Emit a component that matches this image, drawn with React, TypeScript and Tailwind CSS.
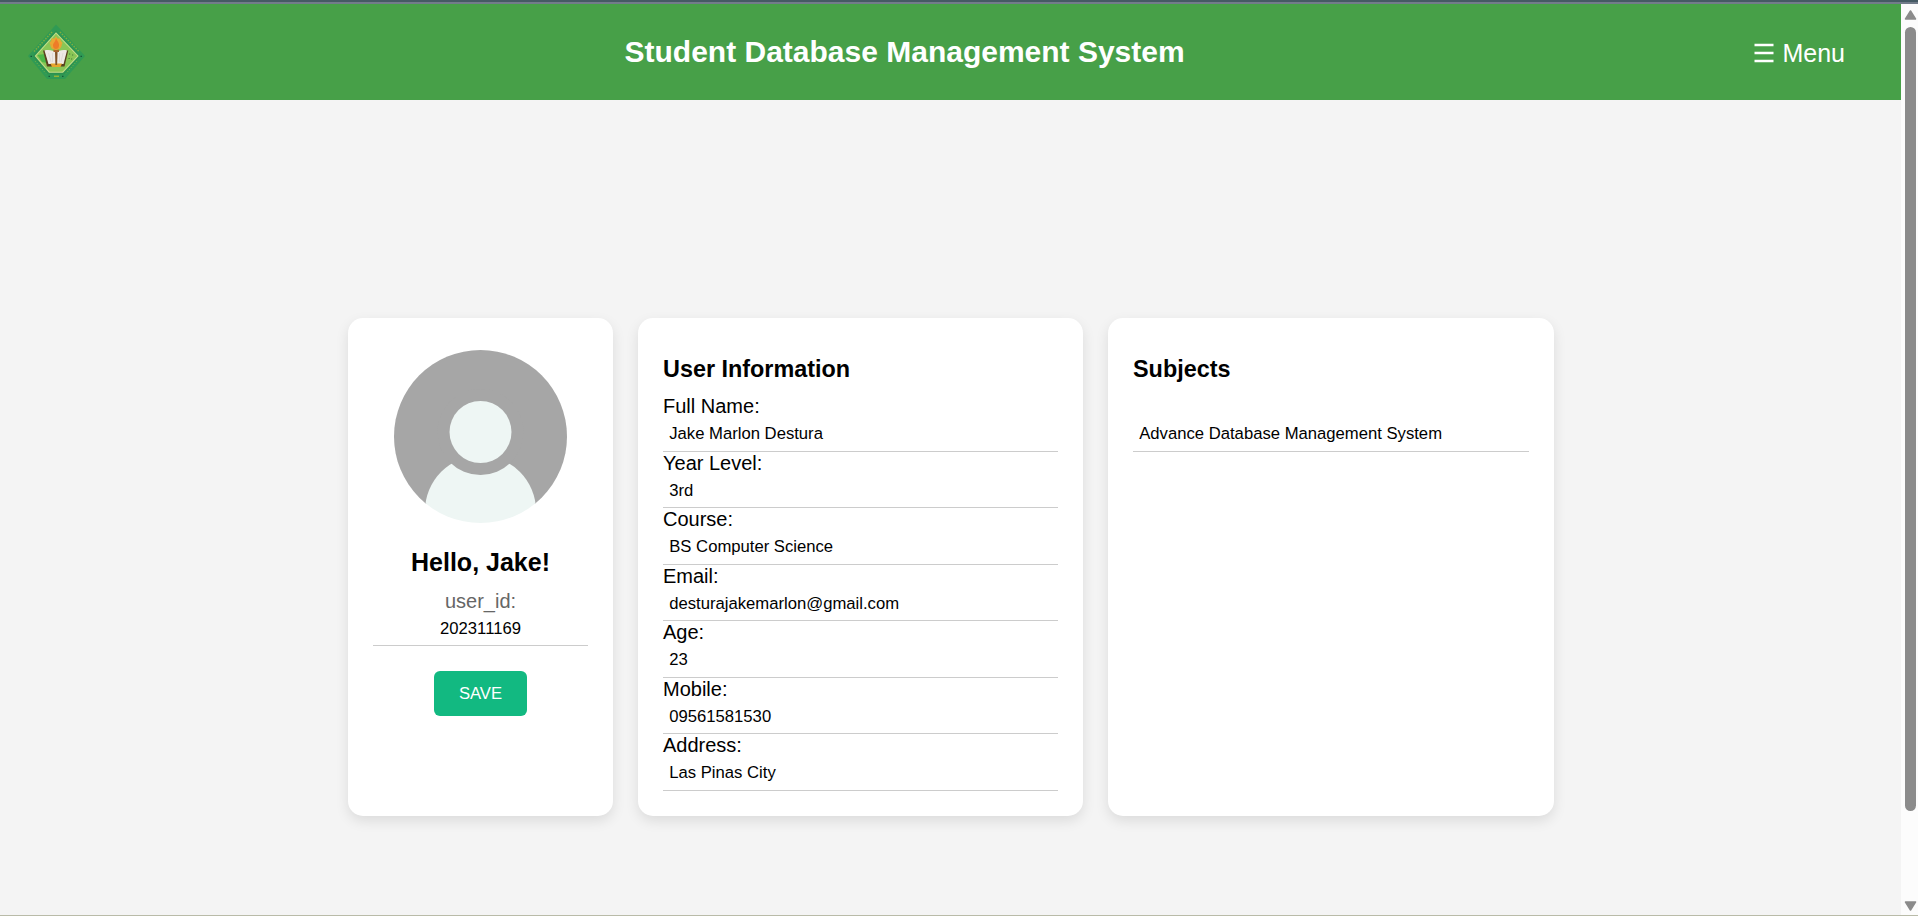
import React from "react";

const fields: { label: string; value: string }[] = [
  { label: "Full Name:", value: "Jake Marlon Destura" },
  { label: "Year Level:", value: "3rd" },
  { label: "Course:", value: "BS Computer Science" },
  { label: "Email:", value: "desturajakemarlon@gmail.com" },
  { label: "Age:", value: "23" },
  { label: "Mobile:", value: "09561581530" },
  { label: "Address:", value: "Las Pinas City" },
];

function Logo() {
  return (
    <svg viewBox="0 0 62 62" className="block h-[62px] w-[62px]">
      <path d="M31 3.5 60 35 40 58H22L3 35Z" fill="#309a54" />
      <path d="M31 9.500 55 35 39 53.500H23L7.500 35Z" fill="#2b9150" />
      <path d="M31 11.300 53.700 35 38 51.700H24L9.700 35Z" fill="#c6e08a" />
      <path d="M31 12.800 52.300 35 37.400 50.700H24.600L11.100 35Z" fill="#8ac656" />
      <path d="M9 30.500 27 11M35 11 54 30.500" stroke="#7fae3c" strokeWidth="1.500" strokeDasharray="1.500 1.300" fill="none" />
      <path d="M10 40 21 52.500M52 40 41 52.500" stroke="#6fae45" strokeWidth="1" strokeDasharray="1.200 1.500" fill="none" />
      <path d="M5.500 35.300h1.500M55.500 35.300h1.500M23.500 55.300h1.500M37 55.300h1.500" stroke="#15593a" strokeWidth="1.200" />
      <path d="M29 55.300h5" stroke="#93b534" strokeWidth="1.500" />
      <path d="M12.500 34 20 33 22 42 17 41Z" fill="#4cb848" />
      <path d="M44 33h1.200M47 34h1.200M43.500 37.500h1.200M46 38h1.200" stroke="#447c3d" strokeWidth="1.200" />
      <path d="M18 29.500H20L24 43H38L41.500 29.500H43.300L39.500 45.500H22Z" fill="#59421f" />
      <path d="M19.500 29.500C24 28.500 28.500 29.500 31 31.500 34 29.500 38 28.500 42 29.500L38.500 43H23.500Z" fill="#eee9e4" />
      <path d="M23.500 32 26 41M38 32 36 41M27.500 32v9M34.500 32v9" stroke="#d8d1ce" strokeWidth=".6" />
      <path d="M25.500 42.500H37L35.500 46H27Z" fill="#e6a52c" />
      <path d="M30 30h2.600l-.5 14h-1.700Z" fill="#805328" />
      <path d="M28.500 28.500h5.500v2.500h-5.500Z" fill="#a8652b" />
      <circle cx="31" cy="23" r="6" fill="#e2a733" />
      <path d="m31 15 1.500 3 3-.8-.5 3 3 1.800-3 1.500 1 3-3-.5-2 2.500-2-2.500-3 .5 1-3-3-1.500 3-1.800-.5-3 3 .8Z" fill="#e9a934" />
      <path d="M31 17C32 20 34.500 21.500 34 25c-.5 4-5.500 4-6 0-.3-3 2-3 3-8Z" fill="#ee7c28" />
    </svg>
  );
}

function Avatar() {
  return (
    <svg viewBox="0 0 173 173" className="block h-[173px] w-[173px]">
      <defs>
        <clipPath id="avatar-clip">
          <circle cx="86.500" cy="86.500" r="86.500" />
        </clipPath>
      </defs>
      <g clipPath="url(#avatar-clip)">
        <rect width="173" height="154" fill="#a6a6a6" />
        <circle cx="86.500" cy="161" r="55.500" fill="#eef6f4" />
        <circle cx="86.500" cy="82" r="43" fill="#a6a6a6" />
        <circle cx="86.500" cy="82" r="31" fill="#eef6f4" />
      </g>
    </svg>
  );
}

function Card({ className, children }: { className: string; children: React.ReactNode }) {
  return (
    <section className={`h-[498px] rounded-[15px] bg-white px-[25px] shadow-[0_5px_12.5px_rgba(0,0,0,0.1)] ${className}`}>
      {children}
    </section>
  );
}

function Scrollbar() {
  return (
    <div className="flex w-[17px] shrink-0 flex-col items-center bg-[#fcfcfc] pt-[6px] pb-[4px]">
      <svg viewBox="0 0 13 10" className="ml-[1px] h-[10px] w-[13px]">
        <path d="M6.500 1 11.500 9H1.500Z" fill="#8b8b8b" stroke="#8b8b8b" strokeWidth="1.500" strokeLinejoin="round" />
      </svg>
      <div className="mt-[7px] ml-[1px] h-[784px] w-[11px] rounded-full bg-[#8b8b8b]" />
      <svg viewBox="0 0 13 10" className="mt-auto ml-[1px] h-[10px] w-[13px]">
        <path d="M6.500 9 11.500 1H1.500Z" fill="#8b8b8b" stroke="#8b8b8b" strokeWidth="1.500" strokeLinejoin="round" />
      </svg>
    </div>
  );
}

export default function App() {
  return (
    <div className="flex h-[916px] w-[1918px] flex-col overflow-hidden font-['Liberation_Sans',Arial,sans-serif] text-black">
      <div className="h-[2px] shrink-0 bg-[#455a64]" />
      <div className="h-[2px] shrink-0 bg-[#727c8a]" />
      <div className="flex min-h-0 flex-1">
        <div className="flex flex-1 flex-col bg-[#f4f4f4]">
          <header className="flex h-[96px] items-center bg-[#47a048] pr-[56px] pl-[25px] text-white">
            <Logo />
            <h1 className="-mt-[1px] ml-[537.5px] text-[30px] leading-[34px] font-bold whitespace-nowrap">
              Student Database Management System
            </h1>
            <button className="mt-[2px] ml-auto flex items-center gap-[8px] text-[25px] leading-[29px]">
              <svg viewBox="0 0 20 20" className="h-[20px] w-[20px]">
                <path d="M.5 2H19.500M.5 10H19.500M.5 18H19.500" stroke="white" strokeWidth="2.300" />
              </svg>
              Menu
            </button>
          </header>

          <main className="flex gap-[25px] pt-[218px] pl-[348px]">
            <Card className="flex w-[265px] flex-col items-center pt-[32px]">
              <Avatar />
              <h2 className="mt-[25px] text-[25px] leading-[29px] font-bold">Hello, Jake!</h2>
              <p className="mt-[13px] text-[20px] leading-[23px] text-[#666]">user_id:</p>
              <div className="h-[33px] w-full border-b border-[#ccc] pt-[6px] text-center text-[16.667px] leading-[19px]">
                202311169
              </div>
              <button className="mt-[25px] h-[45px] w-[93px] rounded-[6px] bg-[#12b981] text-[16.667px] leading-[19px] text-white">
                SAVE
              </button>
            </Card>

            <Card className="w-[445px] pt-[37.5px]">
              <h3 className="mb-[12.75px] text-[23.4px] leading-[27px] font-bold">User Information</h3>
              {fields.map((field) => (
                <div key={field.label} className="h-[56.5px] border-b border-[#ccc]">
                  <div className="text-[20px] leading-[23px]">{field.label}</div>
                  <div className="px-[6.25px] pt-[6px] text-[16.667px] leading-[19px]">{field.value}</div>
                </div>
              ))}
            </Card>

            <Card className="w-[446px] pt-[37.5px]">
              <h3 className="text-[23.4px] leading-[27px] font-bold">Subjects</h3>
              <div className="mt-[35.75px] h-[33.5px] border-b border-[#ccc] px-[6.25px] pt-[6px] text-[16.667px] leading-[19px]">
                Advance Database Management System
              </div>
            </Card>
          </main>
        </div>
        <Scrollbar />
      </div>
      <div className="h-px shrink-0 bg-[#b9bba8]" />
    </div>
  );
}
